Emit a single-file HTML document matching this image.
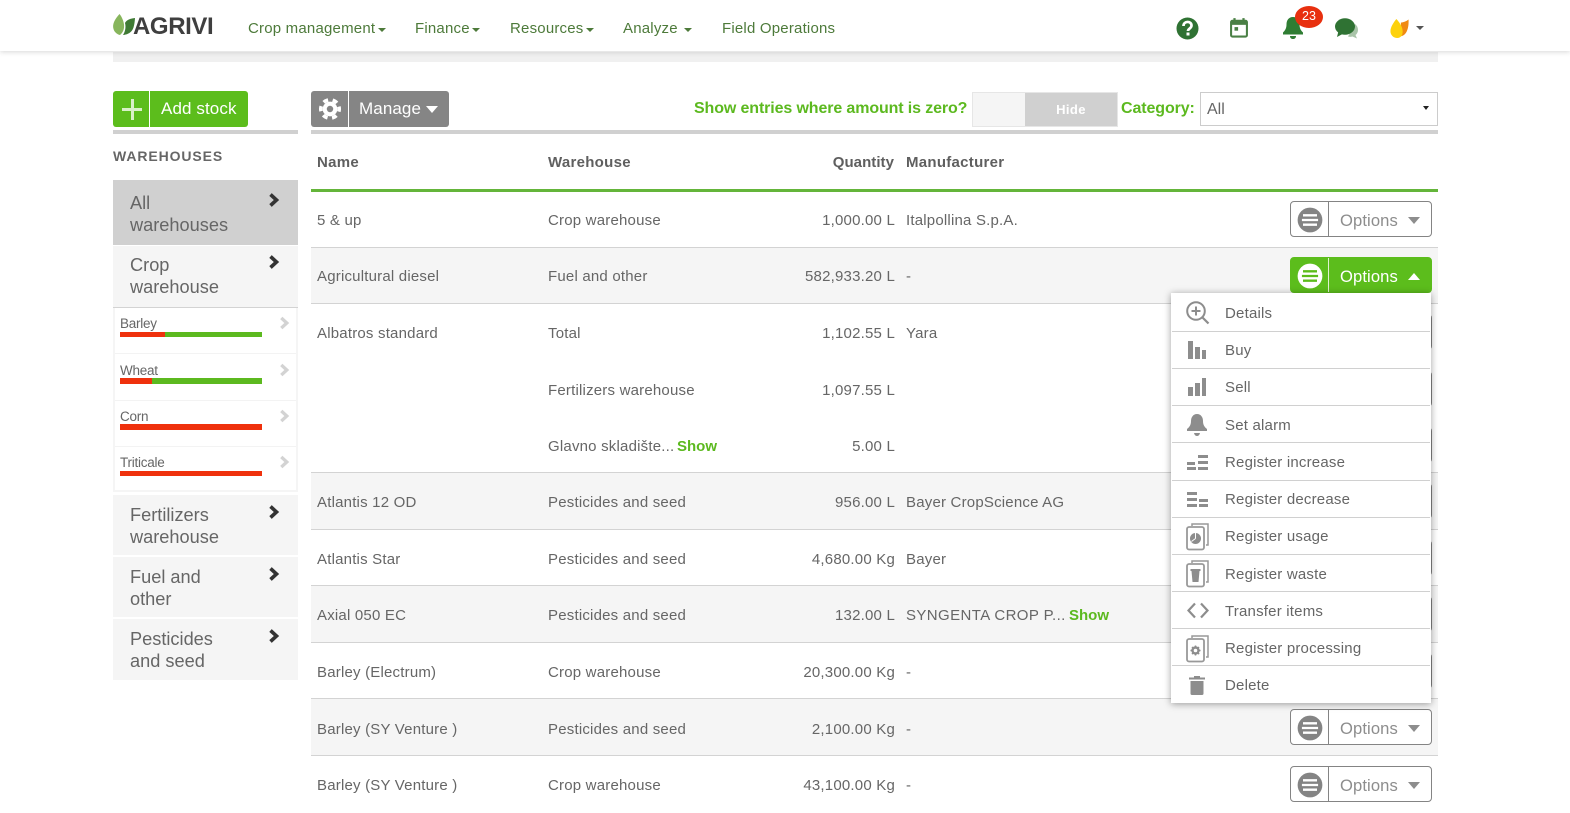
<!DOCTYPE html>
<html><head><meta charset="utf-8"><style>
html,body{margin:0;padding:0;background:#fff}
body{width:1570px;height:813px;overflow:hidden;position:relative;font-family:"Liberation Sans",sans-serif;color:#666;font-size:15px}
.a,.t,.r,.b{position:absolute}
.t{white-space:nowrap;line-height:20px;letter-spacing:.2px}
.n{color:#4d7a3a;font-size:15px;top:19px}
.h{font-weight:bold;color:#5f5f5f;letter-spacing:.28px}
.q{text-align:right;right:675px}
.g{color:#5cb91f;font-weight:bold;letter-spacing:0}
.r{left:311px;width:1127px;border-bottom:1px solid #d3d3d3;box-sizing:border-box}
.s{background:#f5f5f5}
.b{left:1290px;width:142px;height:36px;box-sizing:border-box;border:1px solid #848484;border-radius:4px;background:#fff;color:#8d8d8d;font-size:16.6px}
.b i{position:absolute;left:37px;top:0;bottom:0;width:1px;background:#848484}
.b span{position:absolute;left:49px;top:9px;line-height:20px;letter-spacing:.1px}
.b svg{position:absolute;left:5px;top:4px}
.b u{position:absolute;left:117px;top:15px;border-left:6.5px solid transparent;border-right:6.5px solid transparent;border-top:7px solid #8d8d8d}
.w{left:113px;width:185px;background:#f5f5f5;font-size:18.2px;line-height:22.3px;color:#666}
.w span{position:absolute;left:17px;top:12px}
.w svg{position:absolute;left:155px;top:13px}
.c{left:120px;font-size:13.5px;color:#666;letter-spacing:-.25px;line-height:16px}
.d{left:1172px;width:258px;height:1px;background:#d0d0d0}
.m{left:1225px;font-size:15px;letter-spacing:.2px}
</style></head><body>
<svg width="0" height="0" style="position:absolute"><defs>
<symbol id="o" viewBox="0 0 26 26"><circle cx="13" cy="13" r="11.5" fill="currentColor"/><path d="M6.500 8.600h13M5.500 13h15M6.500 17.400h13" stroke="var(--l,#fff)" stroke-width="2.200"/></symbol>
<symbol id="ch" viewBox="0 0 12 14"><path d="M2.500 1.500 8.500 7l-6 5.500" fill="none" stroke="currentColor" stroke-width="3.600"/></symbol>
</defs></svg>

<!-- top bar -->
<div class="a" style="left:113px;top:52px;width:1325px;height:10px;background:#f0f0f0"></div>
<div class="a" style="left:0;top:0;width:1570px;height:51px;background:#fff;box-shadow:0 1px 5px rgba(0,0,0,.16)"></div>
<svg class="a" style="left:112px;top:13px" width="24" height="24" viewBox="0 0 24 24"><path d="M7.500 1C3 6 0 11 1.500 16c1 3.500 4 5.500 6.500 6 3-2.500 4.500-6 4-10.500C11.500 8 10 4 7.500 1Z" fill="#87b55c"/><path d="M23 5c-5 .5-8.500 2-10 5 1 3.500.5 8-2 12 5.500-.5 9-3 10.500-7.500C22.500 11 22.800 8 23 5Z" fill="#3f7a34"/></svg>
<div class="t" style="left:133px;top:13px;font-size:24px;line-height:28px;font-weight:bold;color:#3f3f3f;letter-spacing:-.4px">AGRIVI</div>
<div class="t n" style="left:248px">Crop management</div><div class="a" style="left:378px;top:28px;border:4px solid transparent;border-top:4px solid #4d7a3a"></div>
<div class="t n" style="left:415px">Finance</div><div class="a" style="left:472px;top:28px;border:4px solid transparent;border-top:4px solid #4d7a3a"></div>
<div class="t n" style="left:510px">Resources</div><div class="a" style="left:586px;top:28px;border:4px solid transparent;border-top:4px solid #4d7a3a"></div>
<div class="t n" style="left:623px">Analyze</div><div class="a" style="left:684px;top:28px;border:4px solid transparent;border-top:4px solid #4d7a3a"></div>
<div class="t n" style="left:722px">Field Operations</div>

<svg class="a" style="left:1176px;top:17px" width="23" height="23" viewBox="0 0 23 23"><circle cx="11.500" cy="11.500" r="11" fill="#2f7233"/><path d="M7.500 9c0-5.300 8-5.300 8-.5 0 3-3.500 3-3.500 5.500" fill="none" stroke="#fff" stroke-width="2.700"/><rect x="10.500" y="15.500" width="3" height="3" fill="#fff"/></svg>
<svg class="a" style="left:1230px;top:18px" width="18" height="20" viewBox="0 0 20 22"><path d="M5 0v3M15 0v3" stroke="#4a8045" stroke-width="2.500"/><rect x="1.200" y="3" width="17.600" height="17.500" rx="1.500" fill="none" stroke="#4a8045" stroke-width="2.300"/><rect x="1" y="3" width="18" height="4.500" fill="#4a8045"/><rect x="5" y="10" width="4" height="4" fill="#4a8045"/></svg>
<svg class="a" style="left:1282px;top:16px" width="22" height="24" viewBox="0 0 22 24"><path d="M11 1c-4.500 0-6.500 3.500-6.500 7.500 0 4-1.500 6-3.500 8v2h20v-2c-2-2-3.500-4-3.500-8C17.500 4.500 15.500 1 11 1Z" fill="#2f7d33"/><path d="M8 20h6c0 2-1.300 3-3 3s-3-1-3-3Z" fill="#2f7d33"/></svg>
<div class="a" style="left:1295px;top:6px;width:28px;height:22px;border-radius:14px/11px;background:#e8300f;color:#fff;font-size:12.500px;line-height:21px;text-align:center">23</div>
<svg class="a" style="left:1335px;top:18px" width="23" height="21" viewBox="0 0 23 21"><path d="M20 6c2 1.500 3 3.500 3 6 0 2-1 4-2.500 5l1.500 3.500-4.500-2c-1.500.5-3 .5-4.500 0" fill="#a9c4a9"/><ellipse cx="10" cy="8.500" rx="10" ry="8.200" fill="#2f7233"/><path d="M3.500 13 2 19l6.500-3.500Z" fill="#2f7233"/></svg>
<svg class="a" style="left:1390px;top:18px" width="19" height="21" viewBox="0 0 21 23"><path d="M12 5c3-.3 6-1.500 8.500-3.500.3 5-.3 11-3 15-1.500 2-3 3-5 3.500Z" fill="#f08a14"/><path d="M7 1C3.500 5.500.5 10 .5 14.500.5 19 4 22 8 22s6-3 6-7C14 10 11 5 7 1Z" fill="#fdd20d"/></svg>
<div class="a" style="left:1416px;top:26px;border:4px solid transparent;border-top:4px solid #555"></div>

<!-- Left -->
<div class="a" style="left:113px;top:91px;width:135px;height:36px;background:#5cbd1c;border-radius:3px"></div>
<div class="a" style="left:149px;top:91px;width:1px;height:36px;background:#fff"></div>
<div class="a" style="left:122px;top:108px;width:20px;height:3px;background:#d9f0c8"></div>
<div class="a" style="left:131px;top:99px;width:3px;height:21px;background:#d9f0c8"></div>
<div class="t" style="left:161px;top:99px;color:#fff;font-size:17px;letter-spacing:.1px">Add stock</div>
<div class="a" style="left:113px;top:130px;width:185px;height:4px;background:#d0d0d0"></div>
<div class="t" style="left:113px;top:146px;font-size:14px;font-weight:bold;color:#666;letter-spacing:.9px">WAREHOUSES</div>

<div class="a w" style="top:180px;height:65px;background:#d0d0d0"><span>All<br>warehouses</span><svg width="12" height="14" style="color:#333"><use href="#ch"/></svg></div>
<div class="a w" style="top:246px;height:61px;border-bottom:1px solid #d3d3d3"><span style="top:8px">Crop<br>warehouse</span><svg width="12" height="14" style="color:#333;top:9px"><use href="#ch"/></svg></div>
<div class="a" style="left:113px;top:308px;width:185px;height:184px;background:#fff;box-sizing:border-box;border:2px solid #f5f5f5;border-top:0"></div>
<div class="a" style="left:115px;top:353px;width:181px;height:1px;background:#f3f3f3"></div>
<div class="a" style="left:115px;top:400px;width:181px;height:1px;background:#f3f3f3"></div>
<div class="a" style="left:115px;top:446px;width:181px;height:1px;background:#f3f3f3"></div>

<div class="t c" style="top:316px">Barley</div>
<div class="a" style="left:120px;top:332px;width:142px;height:5px;background:#5cb91f"></div><div class="a" style="left:120px;top:332px;width:45px;height:5px;background:#ef310d"></div>
<svg class="a" style="left:279px;top:316px;color:#d3d3d3" width="11" height="14"><use href="#ch"/></svg>
<div class="t c" style="top:363px">Wheat</div>
<div class="a" style="left:120px;top:378px;width:142px;height:6px;background:#5cb91f"></div><div class="a" style="left:120px;top:378px;width:32px;height:6px;background:#ef310d"></div>
<svg class="a" style="left:279px;top:363px;color:#d3d3d3" width="11" height="14"><use href="#ch"/></svg>
<div class="t c" style="top:409px">Corn</div>
<div class="a" style="left:120px;top:424px;width:142px;height:6px;background:#ef310d"></div>
<svg class="a" style="left:279px;top:409px;color:#d3d3d3" width="11" height="14"><use href="#ch"/></svg>
<div class="t c" style="top:455px">Triticale</div>
<div class="a" style="left:120px;top:471px;width:142px;height:5px;background:#ef310d"></div>
<svg class="a" style="left:279px;top:455px;color:#d3d3d3" width="11" height="14"><use href="#ch"/></svg>

<div class="a w" style="top:495px;height:60px"><span style="top:9px">Fertilizers<br>warehouse</span><svg width="12" height="14" style="color:#333;top:10px"><use href="#ch"/></svg></div>
<div class="a w" style="top:557px;height:60px"><span style="top:9px">Fuel and<br>other</span><svg width="12" height="14" style="color:#333;top:10px"><use href="#ch"/></svg></div>
<div class="a w" style="top:619px;height:61px"><span style="top:9px">Pesticides<br>and seed</span><svg width="12" height="14" style="color:#333;top:10px"><use href="#ch"/></svg></div>

<!-- toolbar -->
<div class="a" style="left:311px;top:91px;width:138px;height:36px;background:#858585;border-radius:3px"></div>
<div class="a" style="left:348px;top:91px;width:1px;height:36px;background:#fff"></div>
<svg class="a" style="left:319px;top:98px" width="22" height="22" viewBox="0 0 24 24"><circle cx="12" cy="12" r="8" fill="#fff"/><circle cx="12" cy="12" r="10" fill="none" stroke="#fff" stroke-width="4" stroke-dasharray="5.500 4.970" transform="rotate(-15 12 12)"/><circle cx="12" cy="12" r="3.500" fill="#858585"/></svg>
<div class="t" style="left:359px;top:99px;color:#fff;font-size:17px;letter-spacing:.1px">Manage</div>
<div class="a" style="left:426px;top:106px;border-left:6.500px solid transparent;border-right:6.500px solid transparent;border-top:7px solid #fff"></div>
<div class="a" style="left:311px;top:130px;width:1127px;height:4px;background:#d0d0d0"></div>

<div class="t g" style="left:694px;top:99px;font-size:16px;letter-spacing:-.12px">Show entries where amount is zero?</div>
<div class="a" style="left:972px;top:92px;width:146px;height:35px;box-sizing:border-box;border:1px solid #e6e6e6;background:#f5f5f5"></div>
<div class="a" style="left:1025px;top:93px;width:92px;height:33px;background:#d0d0d0;color:#fff;font-weight:bold;font-size:13px;line-height:33px;text-align:center;letter-spacing:.4px">Hide</div>
<div class="t g" style="left:1121px;top:99px;font-size:16px;letter-spacing:-.1px">Category:</div>
<div class="a" style="left:1200px;top:92px;width:238px;height:34px;box-sizing:border-box;border:1px solid #ccc;background:#fff"></div>
<div class="t" style="left:1207px;top:100px;font-size:16px;letter-spacing:0">All</div>
<div class="a" style="left:1423px;top:106px;border:3.500px solid transparent;border-top:4.500px solid #222"></div>

<!-- Table -->
<div class="t h" style="left:317px;top:153px">Name</div>
<div class="t h" style="left:548px;top:153px">Warehouse</div>
<div class="t h" style="right:676px;top:153px;letter-spacing:.05px">Quantity</div>
<div class="t h" style="left:906px;top:153px">Manufacturer</div>
<div class="a" style="left:311px;top:189px;width:1127px;height:3px;background:#64b53a"></div>

<div class="r" style="top:192px;height:56px"></div>
<div class="r s" style="top:248px;height:56px"></div>
<div class="r" style="top:304px;height:169px"></div>
<div class="r s" style="top:473px;height:57px"></div>
<div class="r" style="top:530px;height:56px"></div>
<div class="r s" style="top:586px;height:57px"></div>
<div class="r" style="top:643px;height:56px"></div>
<div class="r s" style="top:699px;height:57px"></div>

<div class="t" style="left:317px;top:211px">5 &amp; up</div><div class="t" style="left:548px;top:211px">Crop warehouse</div><div class="t q" style="top:211px">1,000.00 L</div><div class="t" style="left:906px;top:211px">Italpollina S.p.A.</div>
<div class="t" style="left:317px;top:267px">Agricultural diesel</div><div class="t" style="left:548px;top:267px">Fuel and other</div><div class="t q" style="top:267px">582,933.20 L</div><div class="t" style="left:906px;top:267px">-</div>
<div class="t" style="left:317px;top:324px">Albatros standard</div><div class="t" style="left:548px;top:324px">Total</div><div class="t q" style="top:324px">1,102.55 L</div><div class="t" style="left:906px;top:324px">Yara</div>
<div class="t" style="left:548px;top:381px">Fertilizers warehouse</div><div class="t q" style="top:381px">1,097.55 L</div>
<div class="t" style="left:548px;top:437px">Glavno skladište...</div><div class="t g" style="left:677px;top:437px">Show</div><div class="t q" style="top:437px">5.00 L</div>
<div class="t" style="left:317px;top:493px">Atlantis 12 OD</div><div class="t" style="left:548px;top:493px">Pesticides and seed</div><div class="t q" style="top:493px">956.00 L</div><div class="t" style="left:906px;top:493px">Bayer CropScience AG</div>
<div class="t" style="left:317px;top:550px">Atlantis Star</div><div class="t" style="left:548px;top:550px">Pesticides and seed</div><div class="t q" style="top:550px">4,680.00 Kg</div><div class="t" style="left:906px;top:550px">Bayer</div>
<div class="t" style="left:317px;top:606px">Axial 050 EC</div><div class="t" style="left:548px;top:606px">Pesticides and seed</div><div class="t q" style="top:606px">132.00 L</div><div class="t" style="left:906px;top:606px;letter-spacing:.4px">SYNGENTA CROP P...</div><div class="t g" style="left:1069px;top:606px">Show</div>
<div class="t" style="left:317px;top:663px">Barley (Electrum)</div><div class="t" style="left:548px;top:663px">Crop warehouse</div><div class="t q" style="top:663px">20,300.00 Kg</div><div class="t" style="left:906px;top:663px">-</div>
<div class="t" style="left:317px;top:720px">Barley (SY Venture )</div><div class="t" style="left:548px;top:720px">Pesticides and seed</div><div class="t q" style="top:720px">2,100.00 Kg</div><div class="t" style="left:906px;top:720px">-</div>
<div class="t" style="left:317px;top:776px">Barley (SY Venture )</div><div class="t" style="left:548px;top:776px">Crop warehouse</div><div class="t q" style="top:776px">43,100.00 Kg</div><div class="t" style="left:906px;top:776px">-</div>

<!-- Option buttons -->
<div class="b" style="top:201px"><svg width="28" height="28" viewBox="0 0 26 26" style="color:#848484"><use href="#o"/></svg><i></i><span>Options</span><u></u></div>
<div class="b" style="top:257px;background:#5cbd1c;border-color:#5cbd1c;color:#fff"><svg width="28" height="28" viewBox="0 0 26 26" style="color:#fff;--l:#5cbd1c"><use href="#o"/></svg><i style="background:#dff2d0"></i><span>Options</span><u style="border-top:0;border-bottom:7px solid #fff"></u></div>
<div class="b" style="top:314px"></div><div class="b" style="top:371px"></div><div class="b" style="top:427px"></div><div class="b" style="top:483px"></div><div class="b" style="top:540px"></div><div class="b" style="top:596px"></div><div class="b" style="top:653px"></div>
<div class="b" style="top:709px"><svg width="28" height="28" viewBox="0 0 26 26" style="color:#848484"><use href="#o"/></svg><i></i><span>Options</span><u></u></div>
<div class="b" style="top:766px"><svg width="28" height="28" viewBox="0 0 26 26" style="color:#848484"><use href="#o"/></svg><i></i><span>Options</span><u></u></div>

<!-- Dropdown -->
<div class="a" style="left:1171px;top:293px;width:260px;height:410px;background:#fff;box-shadow:0 1px 7px rgba(0,0,0,.38)"></div>
<div class="a d" style="top:331px"></div><div class="a d" style="top:368px"></div><div class="a d" style="top:405px"></div><div class="a d" style="top:442px"></div><div class="a d" style="top:480px"></div><div class="a d" style="top:517px"></div><div class="a d" style="top:554px"></div><div class="a d" style="top:591px"></div><div class="a d" style="top:628px"></div><div class="a d" style="top:665px"></div>
<div class="t m" style="top:304px">Details</div>
<div class="t m" style="top:341px">Buy</div>
<div class="t m" style="top:378px">Sell</div>
<div class="t m" style="top:416px">Set alarm</div>
<div class="t m" style="top:453px">Register increase</div>
<div class="t m" style="top:490px">Register decrease</div>
<div class="t m" style="top:527px">Register usage</div>
<div class="t m" style="top:565px">Register waste</div>
<div class="t m" style="top:602px">Transfer items</div>
<div class="t m" style="top:639px">Register processing</div>
<div class="t m" style="top:676px">Delete</div>

<svg class="a" style="left:1185px;top:300px" width="26" height="26" viewBox="0 0 26 26" fill="none" stroke="#8d8d8d"><circle cx="11" cy="11" r="8.800" stroke-width="2"/><path d="M11 6.500v9M6.500 11h9" stroke-width="2"/><path d="M17.500 17.500l6 6" stroke-width="2.200"/></svg>
<svg class="a" style="left:1188px;top:341px" width="19" height="19" fill="#8d8d8d"><rect y="0" width="5" height="18"/><rect x="7" y="6" width="5" height="12"/><rect x="14" y="9" width="4" height="9"/></svg>
<svg class="a" style="left:1188px;top:378px" width="19" height="19" fill="#8d8d8d"><rect y="9" width="5" height="9"/><rect x="7" y="5" width="5" height="13"/><rect x="14" y="0" width="4" height="18"/></svg>
<svg class="a" style="left:1186px;top:414px" width="22" height="23" viewBox="0 0 22 23" fill="#8d8d8d"><path d="M11 0C7 0 5 3.500 5 7c0 4-1.500 6-4 8v2h20v-2c-2.500-2-4-4-4-8 0-3.500-2-7-6-7Z"/><path d="M8 19h6c-.5 2-1.500 3-3 3s-2.500-1-3-3Z"/></svg>
<svg class="a" style="left:1187px;top:455px" width="21" height="16" fill="#8d8d8d"><rect x="0" y="7" width="8" height="3"/><rect x="0" y="12" width="9" height="3"/><rect x="11" y="0" width="10" height="3"/><rect x="11" y="6" width="10" height="3"/><rect x="11" y="12" width="10" height="3"/></svg>
<svg class="a" style="left:1187px;top:492px" width="21" height="16" fill="#8d8d8d"><rect x="0" y="0" width="10" height="3"/><rect x="0" y="6" width="10" height="3"/><rect x="0" y="12" width="10" height="3"/><rect x="12" y="7" width="9" height="3"/><rect x="12" y="12" width="9" height="3"/></svg>
<svg class="a" style="left:1186px;top:523px" width="23" height="28" viewBox="0 0 23 28" fill="none" stroke="#999" stroke-width="1.500"><path d="M6 3V1h16v21h-2"/><rect x="1" y="4" width="17" height="22.500" rx="2" stroke-width="1.800"/><circle cx="9.500" cy="15.500" r="5.500" fill="#8d8d8d" stroke="none"/><path d="M9.500 15.500V10M9.500 15.500l-4 3" stroke="#fff" stroke-width="1"/></svg>
<svg class="a" style="left:1186px;top:560px" width="23" height="28" viewBox="0 0 23 28" fill="none" stroke="#999" stroke-width="1.500"><path d="M6 3V1h16v21h-2"/><rect x="1" y="4" width="17" height="22.500" rx="2" stroke-width="1.800"/><path d="M4.500 9h10v2h-1l-1 11h-6l-1-11h-1Z" fill="#8d8d8d" stroke="none"/></svg>
<svg class="a" style="left:1187px;top:602px" width="22" height="17" fill="none" stroke="#8d8d8d" stroke-width="2.200"><path d="M8 1.500 1.500 8.500 8 15.500M14 1.500l6.500 7-6.500 7"/></svg>
<svg class="a" style="left:1186px;top:635px" width="23" height="28" viewBox="0 0 23 28" fill="none" stroke="#999" stroke-width="1.500"><path d="M6 3V1h16v21h-2"/><rect x="1" y="4" width="17" height="22.500" rx="2" stroke-width="1.800"/><circle cx="9.500" cy="15.500" r="3" stroke="#8d8d8d" stroke-width="2.400"/><path d="M9.500 10.500v2M9.500 18.500v2M4.500 15.500h2M12.500 15.500h2M6 12l1.400 1.400M11.700 17.700l1.400 1.400M13 12l-1.400 1.400M7.400 17.700 6 19.100" stroke="#8d8d8d"/></svg>
<svg class="a" style="left:1189px;top:676px" width="16" height="19" viewBox="0 0 16 19" fill="#8d8d8d"><rect x="0" y="1.500" width="16" height="2"/><rect x="5" y="0" width="6" height="2"/><path d="M1.500 5h13v12.500a1.500 1.500 0 0 1-1.500 1.500H3a1.500 1.500 0 0 1-1.500-1.500Z"/></svg>
</body></html>
